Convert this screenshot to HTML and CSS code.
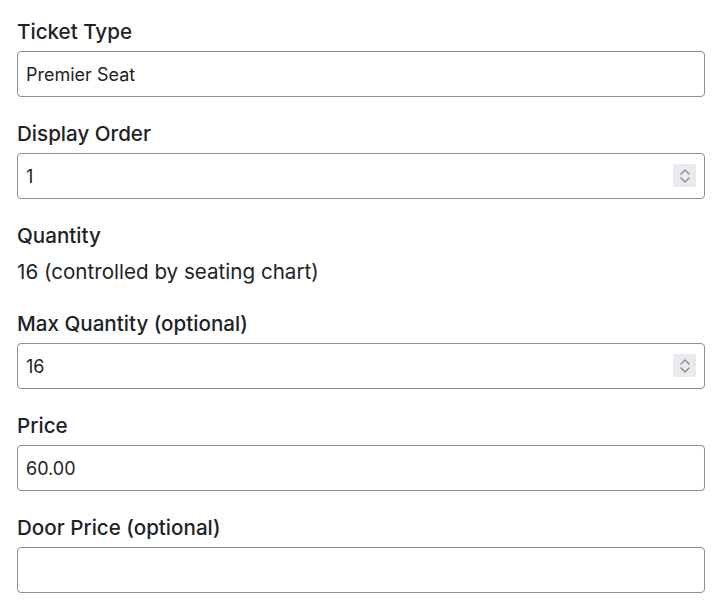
FILE: index.html
```html
<!DOCTYPE html>
<html lang="en">
<head>
    <meta charset="UTF-8">
    <meta name="viewport" content="width=device-width, initial-scale=1.0">
    <title>Edit Ticket Type</title>
    <link rel="stylesheet" href="styles.css">
</head>
<body>
    <form class="ticket-form">
        <div class="field">
            <label for="ticket-type">Ticket Type</label>
            <input type="text" id="ticket-type" value="Premier Seat">
        </div>

        <div class="field">
            <label for="display-order">Display Order</label>
            <div class="number-wrap">
                <input type="text" id="display-order" value="1">
                <span class="spinner">
                    <svg width="12" height="18" viewBox="0 0 12 18"><path d="M2 7 L6 3 L10 7 M2 11 L6 15 L10 11" fill="none" stroke="#8a8a92" stroke-width="1.4" stroke-linecap="round" stroke-linejoin="round"/></svg>
                </span>
            </div>
        </div>

        <div class="field">
            <span class="label">Quantity</span>
            <p class="static-value">16 (controlled by seating chart)</p>
        </div>

        <div class="field">
            <label for="max-quantity">Max Quantity (optional)</label>
            <div class="number-wrap">
                <input type="text" id="max-quantity" value="16">
                <span class="spinner">
                    <svg width="12" height="18" viewBox="0 0 12 18"><path d="M2 7 L6 3 L10 7 M2 11 L6 15 L10 11" fill="none" stroke="#8a8a92" stroke-width="1.4" stroke-linecap="round" stroke-linejoin="round"/></svg>
                </span>
            </div>
        </div>

        <div class="field">
            <label for="price">Price</label>
            <input type="text" id="price" value="60.00">
        </div>

        <div class="field">
            <label for="door-price">Door Price (optional)</label>
            <input type="text" id="door-price" value="">
        </div>
    </form>
</body>
</html>
```

FILE: styles.css
```css
body {
    margin: 0;
    background: #fff;
    font-family: Inter, "Noto Sans", sans-serif;
    color: #1d2327;
}

.ticket-form {
    padding: 18px 17px 0 17px;
    width: 688px;
}

.field {
    margin-bottom: 23px;
}

.field label,
.field .label {
    display: block;
    font-size: 20.6px;
    line-height: 26px;
    font-weight: 500;
    padding-top: 1px;
    margin-bottom: 6px;
}

.field input {
    display: block;
    box-sizing: border-box;
    width: 100%;
    height: 46px;
    padding: 0 8px;
    font-family: inherit;
    font-size: 18px;
    color: #1d2327;
    border: 1px solid #8c8f94;
    border-radius: 4px;
    background: #fff;
}

.static-value {
    margin: 10px 0 0 0;
    padding-bottom: 2px;
    font-size: 20.6px;
    line-height: 26px;
}

.number-wrap {
    position: relative;
}

.spinner {
    position: absolute;
    right: 9px;
    top: 11px;
    width: 23px;
    height: 23px;
    background: #e9e9ee;
    border-radius: 2px;
    display: flex;
    align-items: center;
    justify-content: center;
}
```
